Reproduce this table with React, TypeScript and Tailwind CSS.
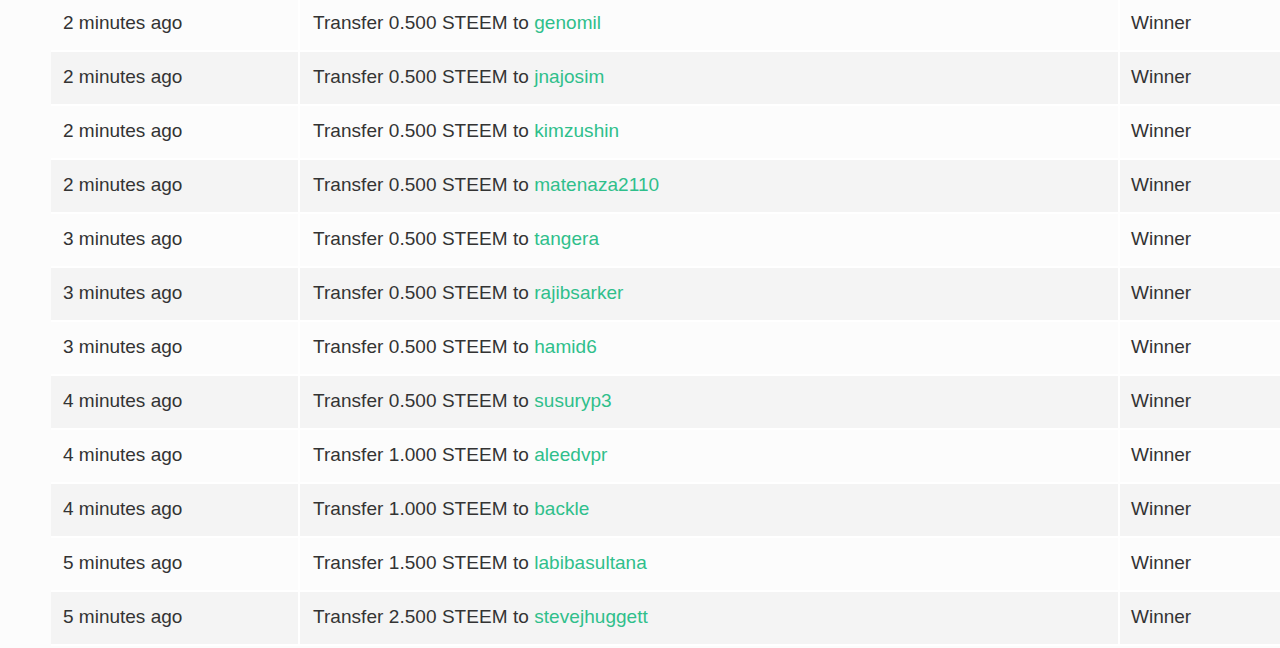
import React from "react";

interface Payout {
  time: string;
  amount: string;
  user: string;
}

const payouts: Payout[] = [
  { time: "2 minutes ago", amount: "0.500", user: "genomil" },
  { time: "2 minutes ago", amount: "0.500", user: "jnajosim" },
  { time: "2 minutes ago", amount: "0.500", user: "kimzushin" },
  { time: "2 minutes ago", amount: "0.500", user: "matenaza2110" },
  { time: "3 minutes ago", amount: "0.500", user: "tangera" },
  { time: "3 minutes ago", amount: "0.500", user: "rajibsarker" },
  { time: "3 minutes ago", amount: "0.500", user: "hamid6" },
  { time: "4 minutes ago", amount: "0.500", user: "susuryp3" },
  { time: "4 minutes ago", amount: "1.000", user: "aleedvpr" },
  { time: "4 minutes ago", amount: "1.000", user: "backle" },
  { time: "5 minutes ago", amount: "1.500", user: "labibasultana" },
  { time: "5 minutes ago", amount: "2.500", user: "stevejhuggett" },
];

const App: React.FC = () => {
  return (
    <div
      className="min-h-screen bg-[#fcfcfc] pl-[51px] overflow-hidden text-[19px] text-[#333333]"
      style={{ fontFamily: '"Liberation Sans", Arial, sans-serif' }}
    >
      {/* payout list */}
      <div className="-mt-[2px] w-[1229px]">
        {payouts.map((p, i) => (
          <div
            key={i}
            className={`flex h-[54px] pb-[2px] border-b-2 border-white ${
              i % 2 === 1 ? "bg-[#f4f4f4]" : "bg-[#fcfcfc]"
            }`}
          >
            <div className="w-[249px] -mb-[2px] pb-[2px] flex items-center pl-3 border-r-2 border-white">
              {p.time}
            </div>
            <div className="w-[820px] -mb-[2px] pb-[2px] flex items-center pl-[13px] border-r-2 border-white">
              <span className="tracking-[0.05px]">
                Transfer {p.amount} STEEM to{" "}
                <a href="#" className="text-[#2fbf8b]">
                  {p.user}
                </a>
              </span>
            </div>
            <div className="flex-1 flex items-center pl-[11px]">Winner</div>
          </div>
        ))}
      </div>
    </div>
  );
};

export default App;
